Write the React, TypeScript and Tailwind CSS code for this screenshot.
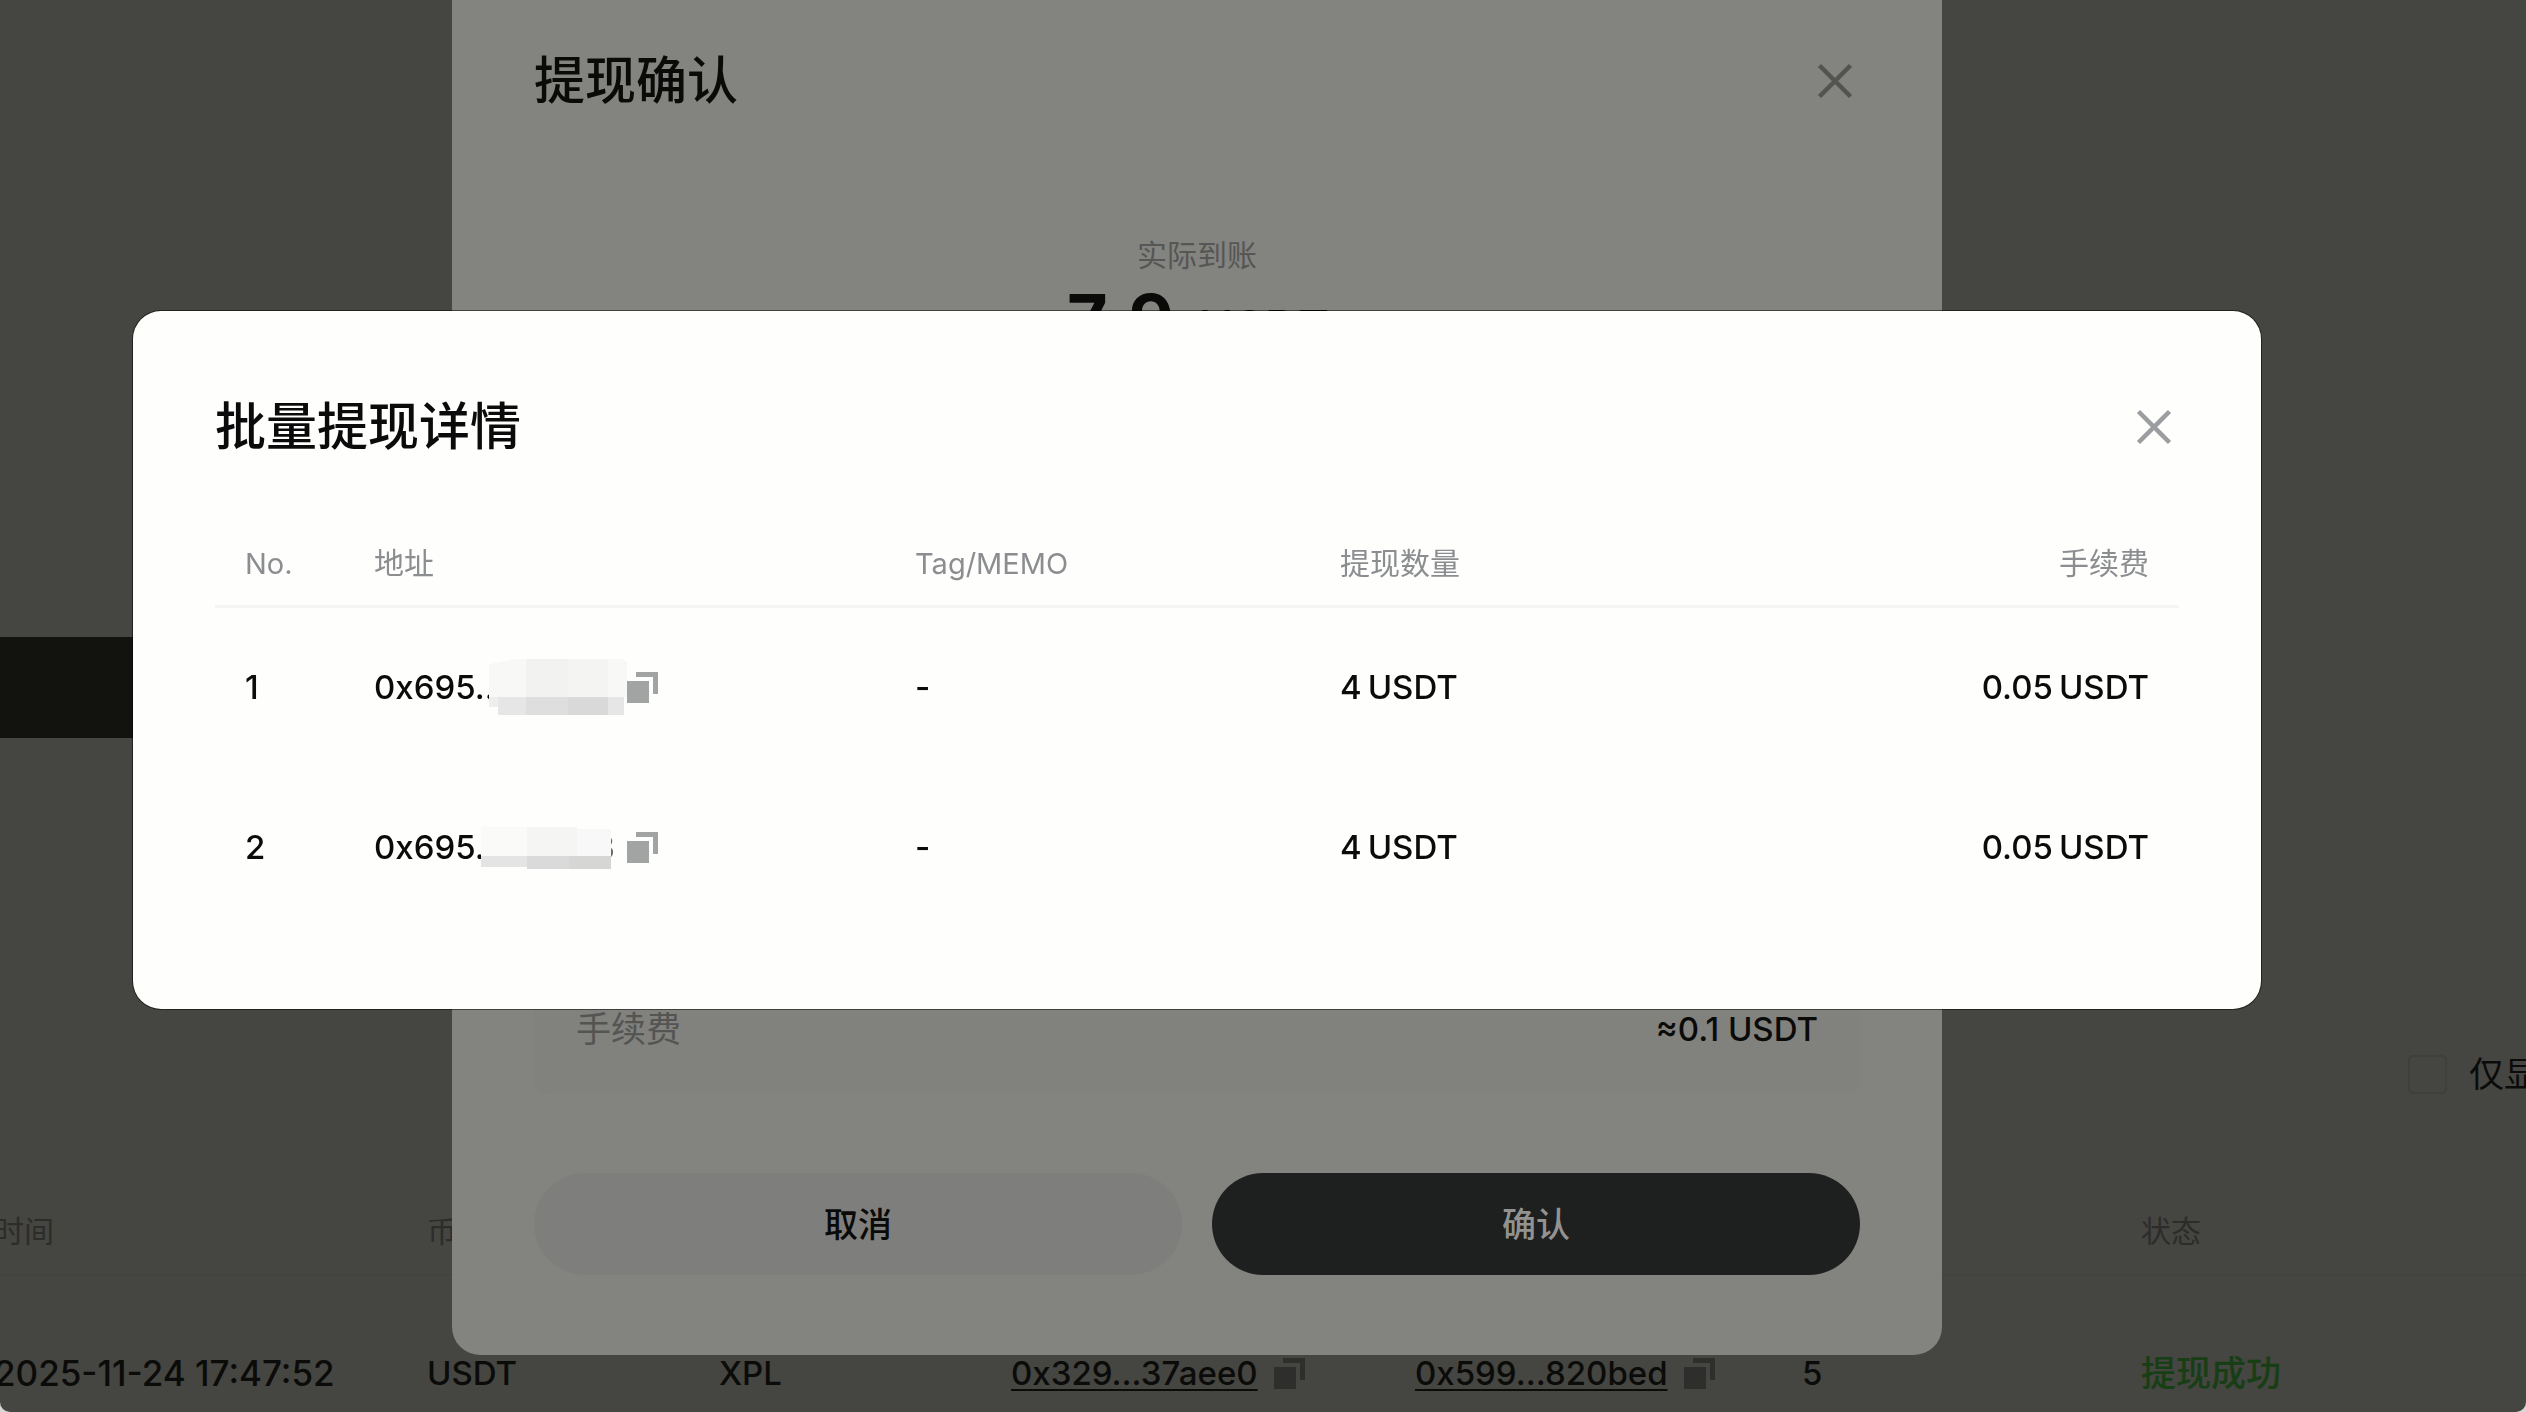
import React, { useState } from 'react';

interface BatchItem {
  no: number;
  prefix: string;
  amount: string;
  fee: string;
}

const ITEMS: BatchItem[] = [
  { no: 1, prefix: '0x695..', amount: '4', fee: '0.05' },
  { no: 2, prefix: '0x695.', amount: '4', fee: '0.05' },
];

function CloseIcon() {
  return (
    <svg viewBox="0 0 50 50" className="w-[50px] h-[50px]" fill="none" stroke="currentColor" strokeWidth="4.5">
      <path d="M9.5 9.5 L40.5 40.5 M40.5 9.5 L9.5 40.5" />
    </svg>
  );
}

function CopyIcon() {
  return (
    <svg viewBox="0 0 31 31" className="w-[31px] h-[31px]" fill="currentColor">
      <rect x="0" y="9" width="22" height="22" />
      <path d="M9 0 H31 V22 H26 V5 H9 Z" />
    </svg>
  );
}

function Amount({ value, unit = 'USDT' }: { value: string; unit?: string }) {
  return (
    <span className="inline-flex gap-1.5">
      <span>{value}</span>
      <span>{unit}</span>
    </span>
  );
}

// Mosaic blocks that hide the middle of an address
function MaskWide() {
  return (
    <svg viewBox="3 0 138 56" className="w-[138px] h-14 shrink-0" shapeRendering="crispEdges" aria-hidden="true">
      <path d="M0 6 L30 0 H138 V2 H144 V48 H0 Z" fill="#f8f8f7" />
      <rect x="40" y="0" width="42" height="38" fill="#f2f2f1" />
      <rect x="82" y="0" width="40" height="38" fill="#f4f4f3" />
      <rect x="0" y="38" width="12" height="10" fill="#eeeeed" />
      <rect x="12" y="38" width="28" height="18" fill="#e6e6e6" />
      <rect x="40" y="38" width="42" height="18" fill="#dedede" />
      <rect x="82" y="38" width="40" height="18" fill="#d9d9d9" />
      <rect x="122" y="38" width="16" height="18" fill="#e6e6e6" />
      <rect x="138" y="38" width="6" height="18" fill="#fefefc" />
    </svg>
  );
}

function MaskNarrow() {
  return (
    <svg viewBox="0 0 130 42" className="w-[130px] h-[42px] shrink-0" shapeRendering="crispEdges" aria-hidden="true">
      <rect x="0" y="0" width="46" height="29" fill="#fafaf8" />
      <rect x="46" y="0" width="50" height="29" fill="#f5f5f3" />
      <rect x="96" y="2" width="34" height="27" fill="#f8f8f8" />
      <rect x="0" y="29" width="46" height="11" fill="#e4e4e4" />
      <rect x="46" y="29" width="42" height="13" fill="#dadada" />
      <rect x="88" y="29" width="42" height="13" fill="#d6d6d5" />
    </svg>
  );
}

function HistoryPage() {
  const [hideOther, setHideOther] = useState(false);

  return (
    <main className="min-h-screen bg-[#454541] rounded-b-[10px] overflow-hidden pt-[637px] text-[#0b0b09]">
      <div className="w-80 h-[101px] bg-[#12120f]" />

      <div className="flex justify-end mt-[316px]">
        <label className="flex items-center gap-[22px] w-[118px] h-10 overflow-hidden whitespace-nowrap text-[35px] leading-10">
          <input
            type="checkbox"
            checked={hideOther}
            onChange={(e) => setHideOther(e.target.checked)}
            className="appearance-none shrink-0 w-[39px] h-[39px] rounded-[5px] border-2 border-[#3f3f3e]"
          />
          仅显
        </label>
      </div>

      <div className="mt-[93px] -ml-1.5">
        <table className="w-full table-fixed text-left">
          <thead>
            <tr className="h-[88px] border-b-2 border-[#42423f] text-[30px] leading-10 text-[#2c2c2b]">
              <th className="w-[433px] font-normal">时间</th>
              <th className="w-[292px] font-normal">币</th>
              <th className="w-[292px]" />
              <th className="w-[404px]" />
              <th className="w-[387px]" />
              <th className="w-[339px]" />
              <th className="font-normal">状态</th>
            </tr>
          </thead>
          <tbody>
            <tr className="h-[134px] align-top text-[33px] leading-10 font-medium">
              <td className="pt-[77px] text-[35px]">2025-11-24 17:47:52</td>
              <td className="pt-[77px]">USDT</td>
              <td className="pt-[77px]">XPL</td>
              <td className="pt-[77px]">
                <div className="flex items-center gap-4">
                  <a href="#tx" className="underline decoration-2 underline-offset-4">0x329...37aee0</a>
                  <button aria-label="复制" className="text-[#2e2e2d]"><CopyIcon /></button>
                </div>
              </td>
              <td className="pt-[77px]">
                <div className="flex items-center gap-4">
                  <a href="#address" className="underline decoration-2 underline-offset-4">0x599...820bed</a>
                  <button aria-label="复制" className="text-[#2e2e2d]"><CopyIcon /></button>
                </div>
              </td>
              <td className="pt-[77px]">5</td>
              <td className="pt-[77px] text-[35px] text-[#173e14]">提现成功</td>
            </tr>
          </tbody>
        </table>
      </div>
    </main>
  );
}

function ConfirmDialog() {
  return (
    <div className="fixed inset-0 flex items-center justify-center overflow-hidden pr-[132px] pb-[92px]">
      <section role="dialog" aria-label="提现确认" className="shrink-0 w-full max-w-[1490px] rounded-[28px] bg-[#83837f] px-[82px] pt-[82px] pb-20 text-[#0a0a09]">
        <div className="flex items-center justify-between h-[68px]">
          <h2 className="text-[51px] leading-[68px] font-medium">提现确认</h2>
          <button aria-label="关闭" className="text-[#535352]"><CloseIcon /></button>
        </div>

        <p className="mt-[120px] text-center text-[30px] leading-10 text-[#565655]">实际到账</p>
        <div className="flex items-baseline justify-center gap-6 h-[90px] leading-[90px] tabular-nums">
          <span className="text-[70px] font-bold">7.9</span>
          <span className="text-[48px] font-medium">USDT</span>
        </div>

        <div className="flex items-end justify-between mt-12 min-h-[680px] rounded-xl bg-[#81817d] px-[42px] pb-[44px] leading-10">
          <span className="text-[35px] text-[#545453]">手续费</span>
          <span className="text-[33px] font-medium">≈0.1 USDT</span>
        </div>

        <div className="grid grid-cols-2 gap-[30px] mt-20">
          <button className="h-[102px] rounded-full bg-[#7e7e7c] text-[34px] font-medium">取消</button>
          <button className="h-[102px] rounded-full bg-[#1e1f1f] text-[34px] font-medium text-[#929291]">确认</button>
        </div>
      </section>
    </div>
  );
}

function DetailDialog() {
  return (
    <div className="fixed inset-0 flex items-center justify-center pr-[132px] pb-[92px]">
      <section role="dialog" aria-label="批量提现详情" className="w-full max-w-[2128px] rounded-[28px] bg-[#fefefc] ring-1 ring-black/50 px-[82px] pt-[82px] pb-[81px] text-[#0b0b0b]">
        <div className="flex items-center justify-between h-[68px]">
          <h2 className="text-[51px] leading-[68px] font-medium">批量提现详情</h2>
          <button aria-label="关闭" className="text-[#9c9da0]"><CloseIcon /></button>
        </div>

        <table className="w-full mt-[61px] table-fixed text-left">
          <thead>
            <tr className="h-[84px] border-b-3 border-[#f5f5f3] text-[30px] text-[#8b8d90]">
              <th className="w-[129px] pl-[30px] text-[29px] font-normal">No.</th>
              <th className="w-[541px] pl-[30px] font-normal">地址</th>
              <th className="w-[425px] pl-[30px] text-[29px] font-normal">Tag/MEMO</th>
              <th className="pl-[30px] font-normal">提现数量</th>
              <th className="pr-[30px] font-normal text-right">手续费</th>
            </tr>
          </thead>
          <tbody>
            {ITEMS.map((item) => (
              <tr key={item.no} className="h-[161px] text-[33px] font-medium">
                <td className="pl-[30px]">{item.no}</td>
                <td className="pl-[30px]">
                  <div className="flex items-center h-14">
                    {item.no === 1 ? (
                      <>
                        <span className="w-[115px] shrink-0 overflow-hidden">{item.prefix}</span>
                        <MaskWide />
                      </>
                    ) : (
                      <>
                        <span className="w-[107px] shrink-0 overflow-hidden">{item.prefix}</span>
                        <MaskNarrow />
                        <span className="flex justify-end w-1 mr-3 overflow-hidden text-[#6b6b6b]">3</span>
                      </>
                    )}
                    <button aria-label="复制" className="text-[#a2a4a4]"><CopyIcon /></button>
                  </div>
                </td>
                <td className="pl-[30px]">-</td>
                <td className="pl-[30px]"><Amount value={item.amount} /></td>
                <td className="pr-[30px] text-right"><Amount value={item.fee} /></td>
              </tr>
            ))}
          </tbody>
        </table>
      </section>
    </div>
  );
}

export default function App() {
  return (
    <div className="bg-[#d8d8d8] font-[Inter,'Noto_Sans_CJK_SC',sans-serif]">
      <HistoryPage />
      <ConfirmDialog />
      <DetailDialog />
    </div>
  );
}
